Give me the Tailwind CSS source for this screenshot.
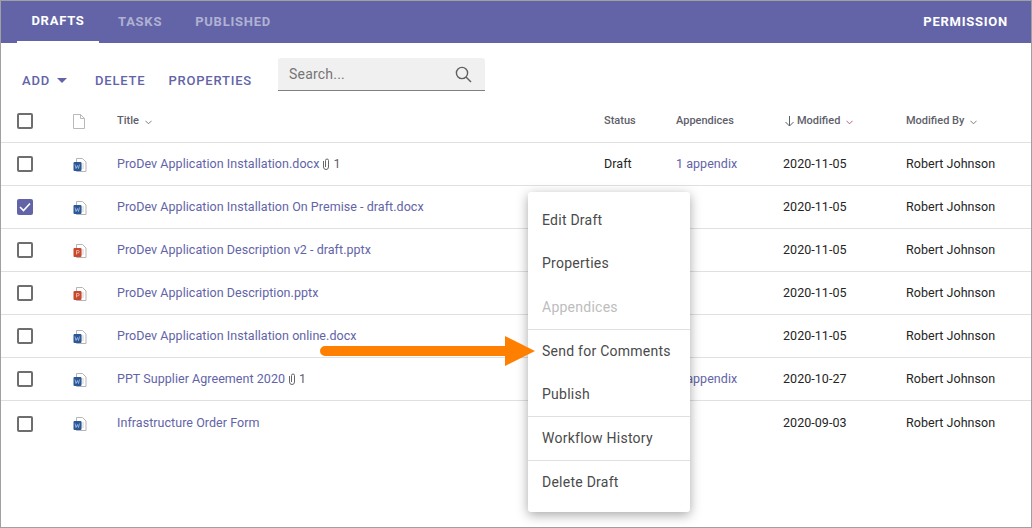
<!DOCTYPE html>
<html lang="en">
<head>
    <meta charset="UTF-8">
    <title>Drafts</title>
    <script src="https://cdn.jsdelivr.net/npm/@tailwindcss/browser@4"></script>
</head>
<body class="bg-white font-['Roboto',sans-serif] overflow-hidden">
<div class="relative w-[1032px] h-[528px] border border-[#a0a0a0] bg-white overflow-hidden">

    <!-- Tabs -->
    <div class="h-[42px] bg-[#6264a7] flex justify-between items-stretch text-[13px] font-bold tracking-[0.75px]">
        <div class="flex pl-4">
            <div class="w-[82px] flex items-center justify-center text-white border-b-2 border-white">DRAFTS</div>
            <div class="ml-[19px] flex items-center text-white/50">TASKS</div>
            <div class="ml-[33px] flex items-center text-white/50">PUBLISHED</div>
        </div>
        <div class="flex items-center pr-[23px] text-white">PERMISSION</div>
    </div>

    <!-- Toolbar -->
    <div class="h-[57px] flex items-start pl-[21px] text-[13px] font-medium tracking-[0.8px] text-[#6264a7]">
        <div class="mt-[28px] flex items-center">ADD
            <svg class="ml-[7px]" width="10" height="5" viewBox="0 0 10 5"><path d="M0 0h10L5 5z" fill="#6264a7"/></svg>
        </div>
        <div class="mt-[28px] ml-[28px]">DELETE</div>
        <div class="mt-[28px] ml-[23px]">PROPERTIES</div>
        <div class="ml-[26px] mt-[15px] w-[207px] h-[33px] bg-[#f0f0f0] rounded-t-[3px] border-b border-[#808080] flex items-center justify-between pl-[11px] pr-[13px] text-[14px] font-normal tracking-[0.2px] text-[#757575]">
            <span>Search...</span>
            <svg width="17" height="17" viewBox="0 0 17 17" fill="none" stroke="#5f5f5f" stroke-width="1.4"><circle cx="7" cy="7" r="5.6"/><path d="M11 11l5 5"/></svg>
        </div>
    </div>

    <!-- Header row -->
    <div class="h-[43px] flex items-center border-b border-[#e0e0e0] text-[11px] font-medium text-[#5f5f6b]">
        <div class="w-[72px] pl-4"><div class="w-4 h-4 border-2 border-[#6e6e6e] rounded-[2px]"></div></div>
        <div class="w-[44px]">
            <svg width="12" height="15" viewBox="0 0 12 15" fill="none" stroke="#b9b9b9"><path d="M.5.5h7l4 4v10H.5zM7.500.5v4h4"/></svg>
        </div>
        <div class="w-[487px] flex items-center">Title
            <svg class="ml-[6px] mt-[2px]" width="7" height="5" viewBox="0 0 8 5" fill="none" stroke="#6e6e6e"><path d="M.5.5L4 4 7.500.5"/></svg>
        </div>
        <div class="w-[72px]">Status</div>
        <div class="w-[107px]">Appendices</div>
        <div class="w-[123px] flex items-center">
            <svg class="ml-px mr-[2px]" width="11" height="12" viewBox="0 0 11 12" fill="none" stroke="#5f5f6b"><path d="M5.500 1v10M1.500 7l4 4 4-4"/></svg>
            Modified
            <svg class="ml-[6px] mt-[2px]" width="7" height="5" viewBox="0 0 8 5" fill="none" stroke="#a0555f"><path d="M.5.5L4 4 7.500.5"/></svg>
        </div>
        <div class="flex items-center">Modified By
            <svg class="ml-[6px] mt-[2px]" width="7" height="5" viewBox="0 0 8 5" fill="none" stroke="#6e6e6e"><path d="M.5.5L4 4 7.500.5"/></svg>
        </div>
    </div>

    <!-- Rows -->
    <div class="text-[12.5px] tracking-[0.045px] text-[#252525]">
        <div class="h-[43px] flex items-center border-b border-[#e0e0e0]">
            <div class="w-[72px] pl-4"><div class="w-4 h-4 border-2 border-[#6e6e6e] rounded-[2px]"></div></div>
            <div class="w-[44px] pt-[2px]"><svg width="14" height="14" viewBox="0 0 14 14"><path d="M3.500.5h6l3.500 3.500v9.500H3.500z" fill="#fff" stroke="#b5b5b5"/><path d="M6 6h5M6 8h5M6 10h5" stroke="#d0d0d0"/><rect x=".5" y="4" width="8" height="9" rx="1" fill="#2b5797"/><path d="M2 6.500l1 4 1.500-3 1 3 1-4" stroke="#a9c0e6" fill="none" stroke-width=".8"/></svg></div>
            <div class="w-[487px] flex items-center text-[#6264a7]">ProDev Application Installation.docx
                <svg class="ml-[3px] mr-[3px]" width="8" height="12" viewBox="0 0 8 12" fill="none" stroke="#666"><path d="M1.500 3v6a2.500 2.500 0 0 0 5 0V2.500a1.500 1.500 0 0 0-3 0V9"/></svg>
                <span class="text-[#5f5f6b]">1</span></div>
            <div class="w-[72px]">Draft</div>
            <div class="w-[107px] text-[#6264a7]">1 appendix</div>
            <div class="w-[123px]">2020-11-05</div>
            <div>Robert Johnson</div>
        </div>
        <div class="h-[43px] flex items-center border-b border-[#e0e0e0]">
            <div class="w-[72px] pl-4"><div class="w-4 h-4 bg-[#6264a7] rounded-[2px] flex items-center justify-center"><svg width="12" height="10" viewBox="0 0 12 10" fill="none" stroke="#fff" stroke-width="1.600"><path d="M1 5l3.500 3.500L11 1.500"/></svg></div></div>
            <div class="w-[44px] pt-[2px]"><svg width="14" height="14" viewBox="0 0 14 14"><path d="M3.500.5h6l3.500 3.500v9.500H3.500z" fill="#fff" stroke="#b5b5b5"/><path d="M6 6h5M6 8h5M6 10h5" stroke="#d0d0d0"/><rect x=".5" y="4" width="8" height="9" rx="1" fill="#2b5797"/><path d="M2 6.500l1 4 1.500-3 1 3 1-4" stroke="#a9c0e6" fill="none" stroke-width=".8"/></svg></div>
            <div class="w-[487px] text-[#6264a7]">ProDev Application Installation On Premise - draft.docx</div>
            <div class="w-[72px]"></div>
            <div class="w-[107px]"></div>
            <div class="w-[123px]">2020-11-05</div>
            <div>Robert Johnson</div>
        </div>
        <div class="h-[43px] flex items-center border-b border-[#e0e0e0]">
            <div class="w-[72px] pl-4"><div class="w-4 h-4 border-2 border-[#6e6e6e] rounded-[2px]"></div></div>
            <div class="w-[44px] pt-[2px]"><svg width="14" height="14" viewBox="0 0 14 14"><path d="M3.500.5h6l3.500 3.500v9.500H3.500z" fill="#fff" stroke="#b5b5b5"/><path d="M6 6h5M6 8h5M6 10h5" stroke="#d0d0d0"/><rect x=".5" y="4" width="8" height="9" rx="1" fill="#c8472d"/><path d="M3.500 10.500V6.500h1.500a1.200 1.200 0 0 1 0 2.400H3.500" stroke="#f0c8bc" fill="none" stroke-width=".8"/></svg></div>
            <div class="w-[487px] text-[#6264a7]">ProDev Application Description v2 - draft.pptx</div>
            <div class="w-[72px]"></div>
            <div class="w-[107px]"></div>
            <div class="w-[123px]">2020-11-05</div>
            <div>Robert Johnson</div>
        </div>
        <div class="h-[43px] flex items-center border-b border-[#e0e0e0]">
            <div class="w-[72px] pl-4"><div class="w-4 h-4 border-2 border-[#6e6e6e] rounded-[2px]"></div></div>
            <div class="w-[44px] pt-[2px]"><svg width="14" height="14" viewBox="0 0 14 14"><path d="M3.500.5h6l3.500 3.500v9.500H3.500z" fill="#fff" stroke="#b5b5b5"/><path d="M6 6h5M6 8h5M6 10h5" stroke="#d0d0d0"/><rect x=".5" y="4" width="8" height="9" rx="1" fill="#c8472d"/><path d="M3.500 10.500V6.500h1.500a1.200 1.200 0 0 1 0 2.400H3.500" stroke="#f0c8bc" fill="none" stroke-width=".8"/></svg></div>
            <div class="w-[487px] text-[#6264a7]">ProDev Application Description.pptx</div>
            <div class="w-[72px]"></div>
            <div class="w-[107px]"></div>
            <div class="w-[123px]">2020-11-05</div>
            <div>Robert Johnson</div>
        </div>
        <div class="h-[43px] flex items-center border-b border-[#e0e0e0]">
            <div class="w-[72px] pl-4"><div class="w-4 h-4 border-2 border-[#6e6e6e] rounded-[2px]"></div></div>
            <div class="w-[44px] pt-[2px]"><svg width="14" height="14" viewBox="0 0 14 14"><path d="M3.500.5h6l3.500 3.500v9.500H3.500z" fill="#fff" stroke="#b5b5b5"/><path d="M6 6h5M6 8h5M6 10h5" stroke="#d0d0d0"/><rect x=".5" y="4" width="8" height="9" rx="1" fill="#2b5797"/><path d="M2 6.500l1 4 1.500-3 1 3 1-4" stroke="#a9c0e6" fill="none" stroke-width=".8"/></svg></div>
            <div class="w-[487px] text-[#6264a7]">ProDev Application Installation online.docx</div>
            <div class="w-[72px]"></div>
            <div class="w-[107px]"></div>
            <div class="w-[123px]">2020-11-05</div>
            <div>Robert Johnson</div>
        </div>
        <div class="h-[43px] flex items-center border-b border-[#e0e0e0]">
            <div class="w-[72px] pl-4"><div class="w-4 h-4 border-2 border-[#6e6e6e] rounded-[2px]"></div></div>
            <div class="w-[44px] pt-[2px]"><svg width="14" height="14" viewBox="0 0 14 14"><path d="M3.500.5h6l3.500 3.500v9.500H3.500z" fill="#fff" stroke="#b5b5b5"/><path d="M6 6h5M6 8h5M6 10h5" stroke="#d0d0d0"/><rect x=".5" y="4" width="8" height="9" rx="1" fill="#2b5797"/><path d="M2 6.500l1 4 1.500-3 1 3 1-4" stroke="#a9c0e6" fill="none" stroke-width=".8"/></svg></div>
            <div class="w-[487px] flex items-center text-[#6264a7]">PPT Supplier Agreement 2020
                <svg class="ml-[3px] mr-[3px]" width="8" height="12" viewBox="0 0 8 12" fill="none" stroke="#666"><path d="M1.500 3v6a2.500 2.500 0 0 0 5 0V2.500a1.500 1.500 0 0 0-3 0V9"/></svg>
                <span class="text-[#5f5f6b]">1</span></div>
            <div class="w-[72px]"></div>
            <div class="w-[107px] text-[#6264a7]">1 appendix</div>
            <div class="w-[123px]">2020-10-27</div>
            <div>Robert Johnson</div>
        </div>
        <div class="h-[45px] flex items-center">
            <div class="w-[72px] pl-4"><div class="w-4 h-4 border-2 border-[#6e6e6e] rounded-[2px]"></div></div>
            <div class="w-[44px]"><svg width="14" height="14" viewBox="0 0 14 14"><path d="M3.500.5h6l3.500 3.500v9.500H3.500z" fill="#fff" stroke="#b5b5b5"/><path d="M6 6h5M6 8h5M6 10h5" stroke="#d0d0d0"/><rect x=".5" y="4" width="8" height="9" rx="1" fill="#2b5797"/><path d="M2 6.500l1 4 1.500-3 1 3 1-4" stroke="#a9c0e6" fill="none" stroke-width=".8"/></svg></div>
            <div class="w-[487px] text-[#6264a7]">Infrastructure Order Form</div>
            <div class="w-[72px]"></div>
            <div class="w-[107px]"></div>
            <div class="w-[123px]">2020-09-03</div>
            <div>Robert Johnson</div>
        </div>
    </div>

    <!-- Context menu -->
    <div class="absolute left-[527px] top-[191px] w-[162px] h-[320px] bg-white rounded-[3px] shadow-[0_3px_12px_rgba(0,0,0,0.35)] text-[14px] tracking-[0.25px] text-[#4a4a4a] py-[6px]">
        <div class="h-[44px] pl-[14px] flex items-center">Edit Draft</div>
        <div class="h-[43px] pl-[14px] flex items-center">Properties</div>
        <div class="h-[45px] pl-[14px] pt-px flex items-center text-[#bdbdbd] border-b border-[#e0e0e0]">Appendices</div>
        <div class="h-[43px] pl-[14px] flex items-center">Send for Comments</div>
        <div class="h-[44px] pl-[14px] flex items-center border-b border-[#e0e0e0]">Publish</div>
        <div class="h-[44px] pl-[14px] flex items-center border-b border-[#e0e0e0]">Workflow History</div>
        <div class="h-[43px] pl-[14px] flex items-center">Delete Draft</div>
    </div>

    <!-- Callout arrow -->
    <svg class="absolute left-[317px] top-[335px]" width="220" height="30" viewBox="0 0 220 30">
        <path d="M7 10h180V0l30 15-30 15V20H7a5 5 0 0 1 0-10z" fill="#ff8000"/>
    </svg>
</div>
</body>
</html>
